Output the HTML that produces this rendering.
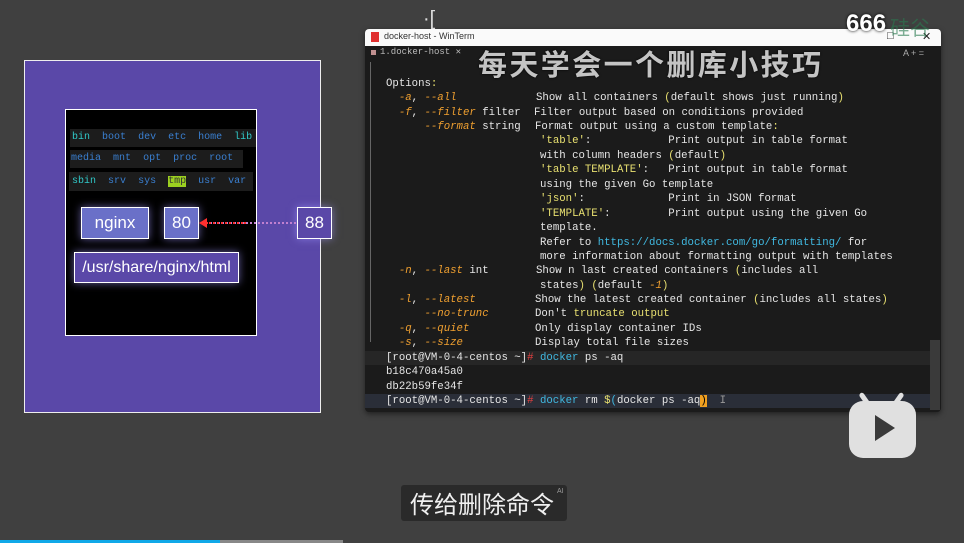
<!DOCTYPE html>
<html><head><meta charset="utf-8"><style>
*{margin:0;padding:0;box-sizing:border-box}
body{width:964px;height:543px;background:#404040;position:relative;overflow:hidden;font-family:"Liberation Sans","Noto Sans CJK SC",sans-serif}
.a{position:absolute}
.m{font-family:"Liberation Mono","DejaVu Sans Mono",monospace;font-size:10.7px;white-space:pre;color:#e6e6e6;line-height:14px}
.o{color:#f0a030;font-style:italic}
.y{color:#e8e070}
.c{color:#40b8e0}
.d{color:#3a7fd0}
.t{color:#30c8c8}
.box{position:absolute;border:1.5px solid #fff;color:#fff;display:flex;align-items:center;justify-content:center;font-size:17px;box-shadow:0 0 8px rgba(160,150,255,.6)}
.dir{font-size:10px !important}
</style></head><body>
<!-- left panel -->
<div class="a" style="left:24px;top:60px;width:297px;height:353px;background:#5a48a8;border:1px solid #eee"></div>
<div class="a" style="left:65px;top:109px;width:192px;height:227px;background:#000;border:1.5px solid #fff"></div>
<div class="a m dir" style="left:70px;top:129px;width:186px;height:18px;background:#1c1c1c;line-height:18px;padding-left:2px"><span class="t">bin</span>  <span class="d">boot</span>  <span class="d">dev</span>  <span class="d">etc</span>  <span class="d">home</span>  <span class="t">lib</span></div>
<div class="a m dir" style="left:70px;top:150px;width:173px;height:18px;background:#1c1c1c;line-height:18px;padding-left:1px"><span class="d">media</span>  <span class="d">mnt</span>  <span class="d">opt</span>  <span class="d">proc</span>  <span class="d">root</span></div>
<div class="a m dir" style="left:69px;top:172px;width:184px;height:19px;background:#1c1c1c;line-height:19px;padding-left:3px"><span class="t">sbin</span>  <span class="d">srv</span>  <span class="d">sys</span>  <span style="background:#9cd020;color:#333">tmp</span>  <span class="d">usr</span>  <span class="d">var</span></div>
<div class="box" style="left:81px;top:207px;width:68px;height:32px;background:#6a70c8">nginx</div>
<div class="box" style="left:164px;top:207px;width:35px;height:32px;background:#6a70c8">80</div>
<div class="box" style="left:74px;top:252px;width:165px;height:31px;background:#5a48a8;font-size:16px">/usr/share/nginx/html</div>
<div class="box" style="left:297px;top:207px;width:35px;height:32px;background:#5a48a8">88</div>
<div class="a" style="left:206px;top:222px;width:90px;border-top:2px dotted #c080d0"></div>
<div class="a" style="left:206px;top:222px;width:40px;border-top:2px dotted #ff3030"></div>
<div class="a" style="left:199px;top:218px;width:0;height:0;border-top:5px solid transparent;border-bottom:5px solid transparent;border-right:8px solid #ff3030"></div>

<!-- terminal -->
<div class="a" style="left:365px;top:29px;width:576px;height:383px;background:#1b1b1b;border-radius:4px;box-shadow:0 2px 6px rgba(0,0,0,.5)"></div>
<div class="a" style="left:365px;top:29px;width:576px;height:17px;background:#fafafa;border-radius:4px 4px 0 0"></div>
<div class="a" style="left:371px;top:32px;width:8px;height:10px;background:#e03030"></div>
<div class="a" style="left:384px;top:31px;font-size:9px;color:#333">docker-host - WinTerm</div>
<div class="a" style="left:887px;top:30px;font-size:11px;color:#222">□</div>
<div class="a" style="left:922px;top:30px;font-size:11px;color:#222">✕</div>
<div class="a" style="left:371px;top:50px;width:5px;height:5px;background:#c09090"></div>
<div class="a" style="left:380px;top:47px;font-size:9px;color:#bbb;font-family:'Liberation Mono',monospace">1.docker-host    ✕</div>
<div class="a" style="left:903px;top:48px;font-size:9px;color:#aaa">A  +  =</div>
<div class="a" style="left:930px;top:340px;width:10px;height:70px;background:#3a3a3a"></div>
<div class="a" style="left:370px;top:62px;width:1px;height:280px;background:#666"></div>
<div class="a" style="left:365px;top:351px;width:565px;height:14px;background:#262626"></div>
<div class="a" style="left:365px;top:394px;width:565px;height:14px;background:#2a2e38"></div>

<div class="a m" style="left:386px;top:77px">Options<span class="y">:</span></div>
<div class="a m" style="left:386px;top:91px">  <span class="o">-a</span>, <span class="o">--all</span></div>
<div class="a m" style="left:536px;top:91px">Show all containers <span class="y">(</span>default shows just running<span class="y">)</span></div>
<div class="a m" style="left:386px;top:106px">  <span class="o">-f</span>, <span class="o">--filter</span> filter</div>
<div class="a m" style="left:534px;top:106px">Filter output based on conditions provided</div>
<div class="a m" style="left:386px;top:120px">      <span class="o">--format</span> string</div>
<div class="a m" style="left:535px;top:120px">Format output using a custom template<span class="y">:</span></div>
<div class="a m" style="left:540px;top:134px"><span class="y">'table'</span>:            Print output in table format</div>
<div class="a m" style="left:540px;top:149px">with column headers <span class="y">(</span>default<span class="y">)</span></div>
<div class="a m" style="left:540px;top:163px"><span class="y">'table TEMPLATE'</span>:   Print output in table format</div>
<div class="a m" style="left:540px;top:178px">using the given Go template</div>
<div class="a m" style="left:540px;top:192px"><span class="y">'json'</span>:             Print in JSON format</div>
<div class="a m" style="left:540px;top:207px"><span class="y">'TEMPLATE'</span>:         Print output using the given Go</div>
<div class="a m" style="left:540px;top:221px">template.</div>
<div class="a m" style="left:540px;top:236px">Refer to <span class="c">https://docs.docker.com/go/formatting/</span> for</div>
<div class="a m" style="left:540px;top:250px">more information about formatting output with templates</div>
<div class="a m" style="left:386px;top:264px">  <span class="o">-n</span>, <span class="o">--last</span> int</div>
<div class="a m" style="left:536px;top:264px">Show n last created containers <span class="y">(</span>includes all</div>
<div class="a m" style="left:540px;top:279px">states<span class="y">)</span> <span class="y">(</span>default <span class="o">-1</span><span class="y">)</span></div>
<div class="a m" style="left:386px;top:293px">  <span class="o">-l</span>, <span class="o">--latest</span></div>
<div class="a m" style="left:535px;top:293px">Show the latest created container <span class="y">(</span>includes all states<span class="y">)</span></div>
<div class="a m" style="left:386px;top:307px">      <span class="o">--no-trunc</span></div>
<div class="a m" style="left:535px;top:307px">Don't <span class="y">truncate output</span></div>
<div class="a m" style="left:386px;top:322px">  <span class="o">-q</span>, <span class="o">--quiet</span></div>
<div class="a m" style="left:535px;top:322px">Only display container IDs</div>
<div class="a m" style="left:386px;top:336px">  <span class="o">-s</span>, <span class="o">--size</span></div>
<div class="a m" style="left:535px;top:336px">Display total file sizes</div>
<div class="a m" style="left:386px;top:351px">[root@VM-0-4-centos ~]<span style="color:#e04040">#</span> <span class="c">docker</span> ps -aq</div>
<div class="a m" style="left:386px;top:365px">b18c470a45a0</div>
<div class="a m" style="left:386px;top:380px">db22b59fe34f</div>
<div class="a m" style="left:386px;top:394px">[root@VM-0-4-centos ~]<span style="color:#e04040">#</span> <span class="c">docker</span> rm <span class="y">$</span><span class="c">(</span>docker ps -aq<span style="background:#f0a020;color:#000">)</span>  <span style="color:#999">I</span></div>

<!-- overlays -->
<div class="a" style="left:478px;top:42px;font-size:29px;font-weight:bold;color:#c4c4c4;letter-spacing:2.4px;text-shadow:0 0 2px #000;font-family:'Noto Sans CJK SC',sans-serif">每天学会一个删库小技巧</div>
<div class="a" style="left:423px;top:8px;font-size:20px;color:#ddd">·[</div>
<div class="a" style="left:846px;top:10px;font-size:24px;font-weight:bold;color:#fff;text-shadow:0 0 3px #000">666</div>
<div class="a" style="left:890px;top:12px;font-size:20px;color:#2a7a50;opacity:.6">硅谷</div>
<div class="a" style="left:849px;top:401px;width:67px;height:57px;background:#e0e0e0;border-radius:14px"></div>
<div class="a" style="left:862px;top:392px;width:5px;height:14px;background:#e0e0e0;border-radius:3px;transform:rotate(-35deg)"></div>
<div class="a" style="left:896px;top:392px;width:5px;height:14px;background:#e0e0e0;border-radius:3px;transform:rotate(35deg)"></div>
<div class="a" style="left:875px;top:415px;width:0;height:0;border-top:13px solid transparent;border-bottom:13px solid transparent;border-left:20px solid #3a3a3a"></div>
<div class="a" style="left:401px;top:485px;width:166px;height:36px;background:#2a2a2a;border-radius:3px"></div>
<div class="a" style="left:410px;top:485px;font-size:24px;color:#f0f0f0;font-family:'Noto Sans CJK SC',sans-serif">传给删除命令</div>
<div class="a" style="left:557px;top:488px;font-size:7px;color:#999">AI</div>
<div class="a" style="left:0;top:540px;width:343px;height:3px;background:#888"></div>
<div class="a" style="left:0;top:540px;width:220px;height:3px;background:#10a8e8"></div>
</body></html>
